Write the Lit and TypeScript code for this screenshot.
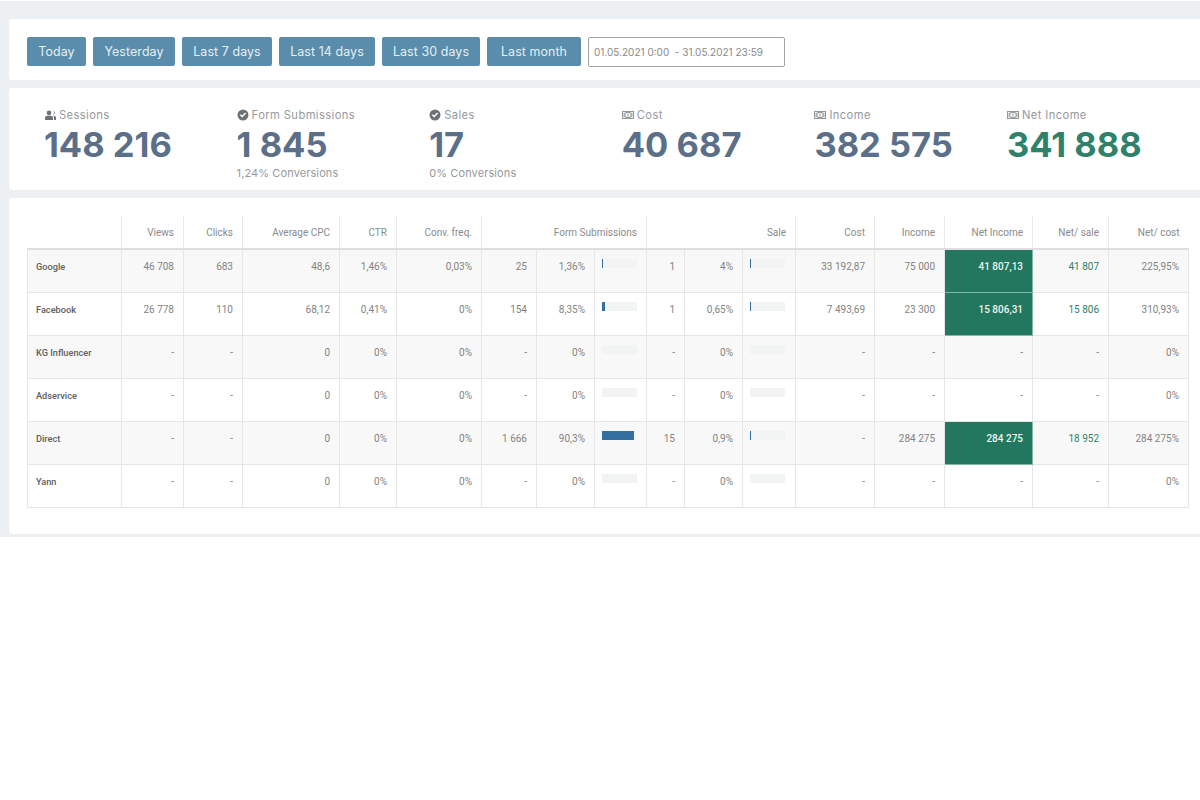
import { LitElement, html, css, svg } from "lit";
import { customElement } from "lit/decorators.js";

const icons = {
  users: svg`<path d="M5 1.6a2.3 2.3 0 1 1 0 4.6 2.3 2.3 0 0 1 0-4.6zM1 11V8.8c0-1.2 1-2 2-2h4c1 0 2 .8 2 2V11H1zM9.3 1.9a2.2 2.2 0 0 1 0 4.2 3.4 3.4 0 0 0 0-4.2zM10 11V8.6c0-.8-.3-1.4-.8-1.9h.9c1 0 1.9.8 1.9 1.9V11h-2z"/>`,
  check: svg`<path fill-rule="evenodd" d="M6 .5a5.5 5.5 0 1 1 0 11 5.5 5.5 0 0 1 0-11zM2.9 6.2l2.2 2.3 4-4-1-1-3 3-1.2-1.2-1 .9z"/>`,
  money: svg`<path fill-rule="evenodd" opacity=".75" d="M0 2h12v8H0V2zm1 1v6h2.4V3H1zm7.6 0v6H11V3H8.6zM6 3.7a2.3 2.3 0 1 0 0 4.6 2.3 2.3 0 0 0 0-4.6z"/><path opacity=".75" d="M5.5 4.6h1v2.8h-1zM1.6 3.8h1.2v4.4H1.6zM9.2 3.8h1.2v4.4H9.2z"/>`,
};

const buttons = ["Today", "Yesterday", "Last 7 days", "Last 14 days", "Last 30 days", "Last month"];

const stats = [
  { icon: icons.users, label: "Sessions", value: "148 216", sub: "" },
  { icon: icons.check, label: "Form Submissions", value: "1 845", sub: "1,24% Conversions" },
  { icon: icons.check, label: "Sales", value: "17", sub: "0% Conversions" },
  { icon: icons.money, label: "Cost", value: "40 687", sub: "" },
  { icon: icons.money, label: "Income", value: "382 575", sub: "" },
  { icon: icons.money, label: "Net Income", value: "341 888", sub: "", green: true },
];

const widths = [94, 62, 59, 97, 57, 85, 55, 58, 52, 38, 58, 53, 79, 70, 88, 76, 80];

interface Row {
  name: string;
  a: string[];
  form: [string, string, number];
  sale: [string, string, number];
  cost: string;
  income: string;
  net: string;
  perSale: string;
  perCost: string;
  highlight: boolean;
}

const rows: Row[] = [
  { name: "Google", a: ["46 708", "683", "48,6", "1,46%", "0,03%"], form: ["25", "1,36%", 1.4], sale: ["1", "4%", 4], cost: "33 192,87", income: "75 000", net: "41 807,13", perSale: "41 807", perCost: "225,95%", highlight: true },
  { name: "Facebook", a: ["26 778", "110", "68,12", "0,41%", "0%"], form: ["154", "8,35%", 8.35], sale: ["1", "0,65%", 4], cost: "7 493,69", income: "23 300", net: "15 806,31", perSale: "15 806", perCost: "310,93%", highlight: true },
  { name: "KG Influencer", a: ["-", "-", "0", "0%", "0%"], form: ["-", "0%", 0], sale: ["-", "0%", 0], cost: "-", income: "-", net: "-", perSale: "-", perCost: "0%", highlight: false },
  { name: "Adservice", a: ["-", "-", "0", "0%", "0%"], form: ["-", "0%", 0], sale: ["-", "0%", 0], cost: "-", income: "-", net: "-", perSale: "-", perCost: "0%", highlight: false },
  { name: "Direct", a: ["-", "-", "0", "0%", "0%"], form: ["1 666", "90,3%", 90.3], sale: ["15", "0,9%", 3], cost: "-", income: "284 275", net: "284 275", perSale: "18 952", perCost: "284 275%", highlight: true },
  { name: "Yann", a: ["-", "-", "0", "0%", "0%"], form: ["-", "0%", 0], sale: ["-", "0%", 0], cost: "-", income: "-", net: "-", perSale: "-", perCost: "0%", highlight: false },
];

@customElement("app-root")
export class AppRoot extends LitElement {
  static styles = css`
    :host {
      display: block;
      background: #fff;
      font-family: "Inter", "Open Sans", sans-serif;
    }
    .page {
      margin-top: 1px;
      background: #edf0f2;
      padding: 18px 0 3px 9px;
      display: flex;
      flex-direction: column;
      gap: 8px;
    }
    .card {
      background: #fff;
      border-radius: 3px 0 0 3px;
    }
    .filters {
      height: 61px;
      box-sizing: border-box;
      padding: 18px 0 0 18px;
      display: grid;
      grid-template-columns: 59px 82px 90px 96px 98px 94px 197px;
      column-gap: 7px;
      align-items: start;
    }
    .btn {
      height: 29px;
      box-sizing: border-box;
      background: #5a8dab;
      color: #e6eff4;
      border-radius: 2px;
      display: flex;
      align-items: center;
      justify-content: center;
      font-size: 12.4px;
      letter-spacing: 0.1px;
    }
    .btn:last-of-type {
      letter-spacing: 0.5px;
    }
    .range {
      height: 30px;
      box-sizing: border-box;
      border: 1px solid #a3a3a3;
      border-radius: 2px;
      color: #8a8a8a;
      font-size: 10px;
      display: flex;
      align-items: center;
      padding-left: 5px;
      white-space: pre;
    }
    .stats {
      height: 102px;
      box-sizing: border-box;
      padding: 20px 0 0 35px;
      display: grid;
      grid-template-columns: repeat(6, 192.6px);
    }
    .label {
      display: flex;
      align-items: center;
      gap: 3px;
      height: 14px;
      font-size: 11.2px;
      color: #96999c;
      letter-spacing: 0.4px;
    }
    .label svg {
      width: 12px;
      height: 12px;
      fill: #6f7274;
      flex: none;
    }
    .value {
      margin-top: 1px;
      font-size: 34.5px;
      line-height: 44px;
      font-weight: 700;
      color: #5b6f89;
      white-space: nowrap;
    }
    .value.green {
      color: #2f8269;
    }
    .sub {
      font-size: 11px;
      line-height: 14px;
      color: #96999c;
      letter-spacing: 0.1px;
      margin-top: -1px;
    }
    .tablecard {
      height: 336px;
      box-sizing: border-box;
      padding: 18px 0 0 18px;
    }
    table {
      width: 1161px;
      table-layout: fixed;
      border-collapse: collapse;
      font-family: "Roboto", "Liberation Sans", sans-serif;
      font-size: 10px;
      color: #838383;
    }
    th {
      height: 33px;
      padding: 0 9px;
      text-align: right;
      font-weight: 400;
      color: #8a8a8a;
      border-left: 1px solid #ebebeb;
      border-bottom: 2px solid #dedede;
      box-sizing: border-box;
      white-space: nowrap;
    }
    th:first-child {
      border-left: 0;
    }
    td {
      height: 43px;
      box-sizing: border-box;
      padding: 10px 9px 0;
      line-height: 14px;
      vertical-align: top;
      text-align: right;
      border: 1px solid #e6e6e6;
      white-space: nowrap;
    }
    tbody tr:nth-child(odd) td {
      background: #f8f8f8;
    }
    td.name {
      text-align: left;
      font-size: 9.2px;
      font-weight: 500;
      color: #606060;
      padding-left: 8px;
    }
    tbody tr td.hl {
      background: #23775f;
      border: 1px solid #7fb8a6;
      color: #eaf5f1;
      font-weight: 500;
    }
    td.pos {
      color: #2f8269;
    }
    tbody tr td.barcell {
      padding: 9px 0 0 7px;
    }
    .bar {
      width: 35px;
      height: 9px;
      background: #f2f3f3;
      border-radius: 1px;
    }
    .fill {
      height: 100%;
      background: #33709f;
    }
  `;

  private bar(pct: number) {
    const w = pct > 0 ? Math.max(1, (pct / 100) * 35) : 0;
    return html`<td class="barcell"><div class="bar"><div class="fill" style="width:${w}px"></div></div></td>`;
  }

  render() {
    return html`
      <div class="page">
        <div class="card filters">
          ${buttons.map((b) => html`<div class="btn">${b}</div>`)}
          <div class="range">01.05.2021 0:00  - 31.05.2021 23:59</div>
        </div>
        <div class="card stats">
          ${stats.map(
            (s) => html`<div>
              <div class="label"><svg viewBox="0 0 12 12">${s.icon}</svg>${s.label}</div>
              <div class="value ${s.green ? "green" : ""}">${s.value}</div>
              ${s.sub ? html`<div class="sub">${s.sub}</div>` : ""}
            </div>`
          )}
        </div>
        <div class="card tablecard">
          <table>
            <colgroup>${widths.map((w) => html`<col style="width:${w}px" />`)}</colgroup>
            <thead>
              <tr>
                <th></th>
                <th>Views</th>
                <th>Clicks</th>
                <th>Average CPC</th>
                <th>CTR</th>
                <th>Conv. freq.</th>
                <th colspan="3">Form Submissions</th>
                <th colspan="3">Sale</th>
                <th>Cost</th>
                <th>Income</th>
                <th>Net Income</th>
                <th>Net/ sale</th>
                <th>Net/ cost</th>
              </tr>
            </thead>
            <tbody>
              ${rows.map(
                (r) => html`<tr>
                  <td class="name">${r.name}</td>
                  ${r.a.map((v) => html`<td>${v}</td>`)}
                  <td>${r.form[0]}</td>
                  <td>${r.form[1]}</td>
                  ${this.bar(r.form[2])}
                  <td>${r.sale[0]}</td>
                  <td>${r.sale[1]}</td>
                  ${this.bar(r.sale[2])}
                  <td>${r.cost}</td>
                  <td>${r.income}</td>
                  <td class="${r.highlight ? "hl" : ""}">${r.net}</td>
                  <td class="${r.highlight ? "pos" : ""}">${r.perSale}</td>
                  <td>${r.perCost}</td>
                </tr>`
              )}
            </tbody>
          </table>
        </div>
      </div>
    `;
  }
}
